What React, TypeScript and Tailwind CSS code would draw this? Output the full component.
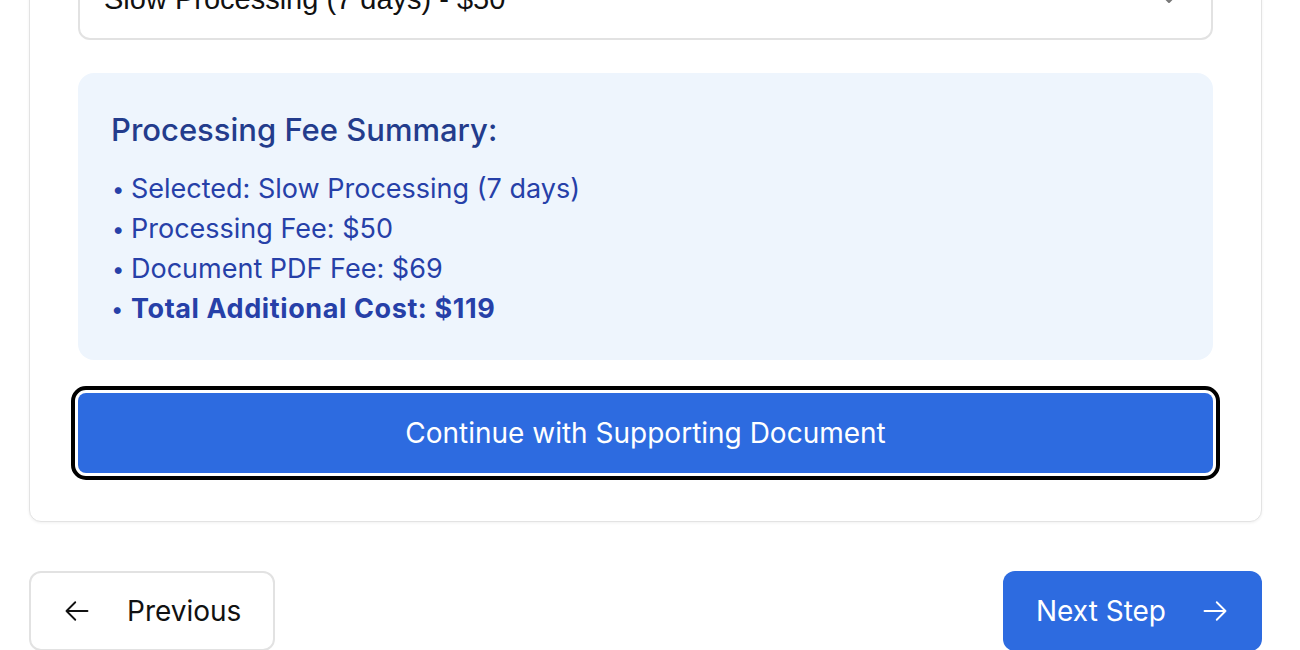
import React from "react";

const ArrowLeft = () => (
  <svg width="28" height="28" viewBox="0 0 24 24" fill="none" stroke="currentColor" strokeWidth="1.6" strokeLinecap="round" strokeLinejoin="round">
    <path d="M10.5 19.5 3 12m0 0 7.5-7.5M3 12h18" />
  </svg>
);

const ArrowRight = () => (
  <svg width="28" height="28" viewBox="0 0 24 24" fill="none" stroke="currentColor" strokeWidth="1.6" strokeLinecap="round" strokeLinejoin="round">
    <path d="M13.5 4.5 21 12m0 0-7.5 7.5M21 12H3" />
  </svg>
);

const Item = ({ children, bold }: { children: React.ReactNode; bold?: boolean }) => (
  <li className={bold ? "flex font-bold tracking-[0.6px]" : "flex"}>
    <span className="inline-block w-[20px] pl-[1px] text-[22px]">•</span>
    <span>{children}</span>
  </li>
);

export default function App() {
  return (
    <div className="min-h-screen bg-white overflow-hidden" style={{ fontFamily: "Inter, 'Noto Sans', sans-serif" }}>
      <div className="ml-[29px] w-[1233px]">
        <div className="-mt-[89px] rounded-[12px] border border-[#e3e3e3] bg-white p-[48px] shadow-[0_1px_3px_rgba(0,0,0,0.06)]">
          <div className="relative flex h-[80px] items-center rounded-[12px] border-2 border-[#e2e2e2] pl-[24px] text-[29px] text-[#111]" style={{ fontFamily: "'Liberation Sans', Arial, sans-serif" }}>
            <span>Slow Processing (7 days) - $50</span>
            <svg className="absolute right-[34px] top-1/2 -translate-y-1/2" width="16" height="16" viewBox="0 0 24 24" fill="none" stroke="#777" strokeWidth="3" strokeLinecap="round" strokeLinejoin="round">
              <path d="m6 9 6 6 6-6" />
            </svg>
          </div>

          <div className="mt-[33px] rounded-[16px] bg-[#eef5fd] px-[33px] pt-[39px] pb-[31px]">
            <h3 className="text-[31px] leading-[36px] font-medium text-[#233c8c]">Processing Fee Summary:</h3>
            <ul className="mt-[21px] text-[27px] leading-[40px] text-[#2640a8]">
              <Item>Selected: Slow Processing (7 days)</Item>
              <Item>Processing Fee: $50</Item>
              <Item>Document PDF Fee: $69</Item>
              <Item bold>Total Additional Cost: $119</Item>
            </ul>
          </div>

          <button className="mt-[33px] flex h-[80px] w-full items-center justify-center rounded-[8px] bg-[#2d6be0] text-[28px] text-white outline-4 outline-offset-[3px] outline-black outline-solid">
            Continue with Supporting Document
          </button>
        </div>

        <div className="mt-[49px] flex items-center justify-between">
          <button className="flex h-[80px] items-center gap-[36px] rounded-[12px] border-2 border-[#e2e2e2] bg-white pl-[32px] pr-[32px] text-[28px] text-[#111]">
            <ArrowLeft />
            <span>Previous</span>
          </button>
          <button className="flex h-[80px] items-center gap-[35px] rounded-[12px] bg-[#2d6be0] pl-[33px] pr-[33px] text-[28px] text-white">
            <span>Next Step</span>
            <ArrowRight />
          </button>
        </div>
      </div>
    </div>
  );
}
